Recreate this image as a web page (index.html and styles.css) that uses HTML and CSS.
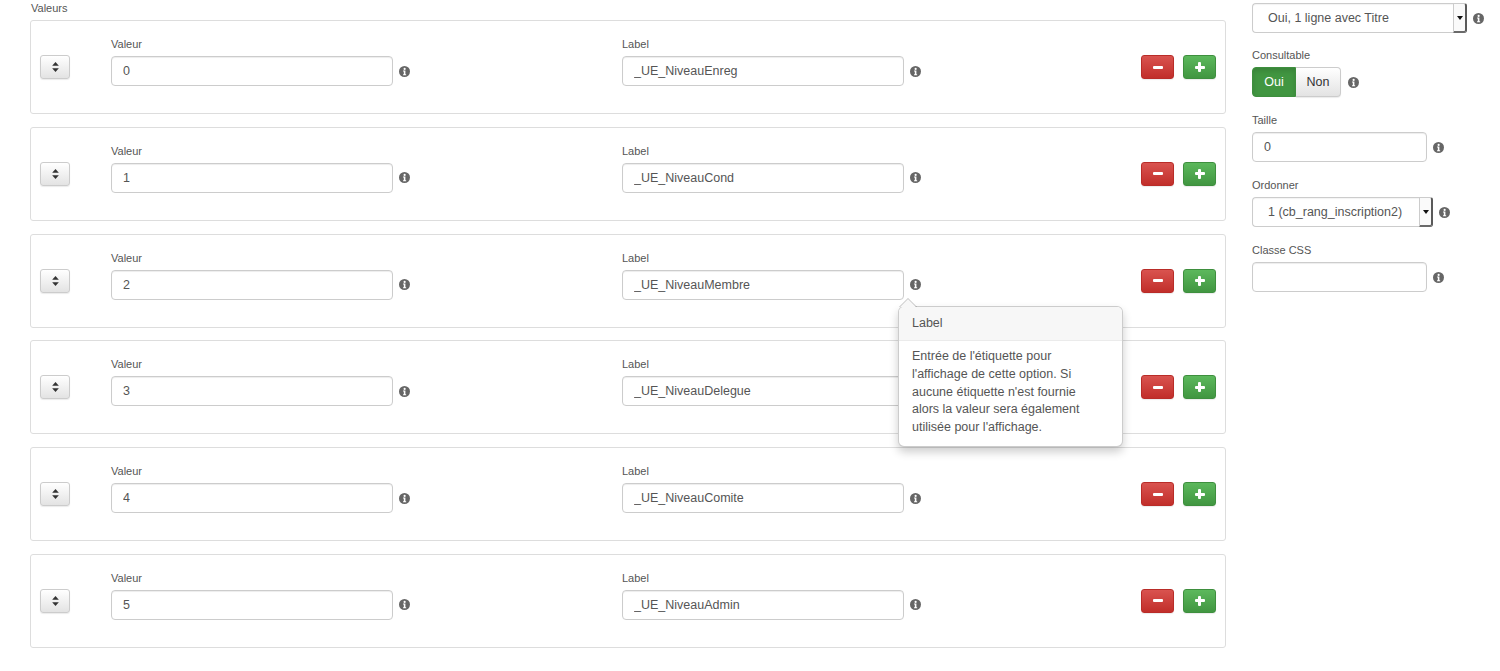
FILE: index.html
```html
<!DOCTYPE html>
<html lang="fr">
<head>
    <meta charset="UTF-8">
    <title>Valeurs du champ</title>
    <link rel="stylesheet" href="styles.css">
</head>
<body>
    <div class="page">
        <div class="values">
            <div class="section-label">Valeurs</div>

            <div class="value-row">
                <div><button class="btn btn-default btn-handle"><svg class="ico-sort" viewBox="0 0 8 12"><polygon points="4,0 8,4.6 0,4.6"/><polygon points="0,7.4 8,7.4 4,12"/></svg></button></div>
                <div class="field">
                    <label>Valeur</label>
                    <div class="field-line"><input class="form-control" type="text" value="0"><span class="info"><svg viewBox="0 0 16 16"><circle cx="8" cy="8" r="8"/><circle class="w" cx="8.2" cy="4.3" r="1.6"/><path class="w" d="M5.9 6.6h3.4v5.3h1.1v1.5H5.9v-1.5h1.1V8.1H5.9z"/></svg></span></div>
                </div>
                <div class="field">
                    <label>Label</label>
                    <div class="field-line"><input class="form-control" type="text" value="_UE_NiveauEnreg"><span class="info"><svg viewBox="0 0 16 16"><circle cx="8" cy="8" r="8"/><circle class="w" cx="8.2" cy="4.3" r="1.6"/><path class="w" d="M5.9 6.6h3.4v5.3h1.1v1.5H5.9v-1.5h1.1V8.1H5.9z"/></svg></span></div>
                </div>
                <div class="row-actions">
                    <button class="btn btn-danger"><span class="minus"></span></button>
                    <button class="btn btn-success"><span class="plus"></span></button>
                </div>
            </div>

            <div class="value-row">
                <div><button class="btn btn-default btn-handle"><svg class="ico-sort" viewBox="0 0 8 12"><polygon points="4,0 8,4.6 0,4.6"/><polygon points="0,7.4 8,7.4 4,12"/></svg></button></div>
                <div class="field">
                    <label>Valeur</label>
                    <div class="field-line"><input class="form-control" type="text" value="1"><span class="info"><svg viewBox="0 0 16 16"><circle cx="8" cy="8" r="8"/><circle class="w" cx="8.2" cy="4.3" r="1.6"/><path class="w" d="M5.9 6.6h3.4v5.3h1.1v1.5H5.9v-1.5h1.1V8.1H5.9z"/></svg></span></div>
                </div>
                <div class="field">
                    <label>Label</label>
                    <div class="field-line"><input class="form-control" type="text" value="_UE_NiveauCond"><span class="info"><svg viewBox="0 0 16 16"><circle cx="8" cy="8" r="8"/><circle class="w" cx="8.2" cy="4.3" r="1.6"/><path class="w" d="M5.9 6.6h3.4v5.3h1.1v1.5H5.9v-1.5h1.1V8.1H5.9z"/></svg></span></div>
                </div>
                <div class="row-actions">
                    <button class="btn btn-danger"><span class="minus"></span></button>
                    <button class="btn btn-success"><span class="plus"></span></button>
                </div>
            </div>

            <div class="value-row">
                <div><button class="btn btn-default btn-handle"><svg class="ico-sort" viewBox="0 0 8 12"><polygon points="4,0 8,4.6 0,4.6"/><polygon points="0,7.4 8,7.4 4,12"/></svg></button></div>
                <div class="field">
                    <label>Valeur</label>
                    <div class="field-line"><input class="form-control" type="text" value="2"><span class="info"><svg viewBox="0 0 16 16"><circle cx="8" cy="8" r="8"/><circle class="w" cx="8.2" cy="4.3" r="1.6"/><path class="w" d="M5.9 6.6h3.4v5.3h1.1v1.5H5.9v-1.5h1.1V8.1H5.9z"/></svg></span></div>
                </div>
                <div class="field">
                    <label>Label</label>
                    <div class="field-line"><input class="form-control" type="text" value="_UE_NiveauMembre"><span class="info has-popover"><svg viewBox="0 0 16 16"><circle cx="8" cy="8" r="8"/><circle class="w" cx="8.2" cy="4.3" r="1.6"/><path class="w" d="M5.9 6.6h3.4v5.3h1.1v1.5H5.9v-1.5h1.1V8.1H5.9z"/></svg>
                        <div class="popover">
                            <div class="popover-title">Label</div>
                            <div class="popover-content">Entrée de l'étiquette pour<br>l'affichage de cette option. Si<br>aucune étiquette n'est fournie<br>alors la valeur sera également<br>utilisée pour l'affichage.</div>
                        </div>
                    </span></div>
                </div>
                <div class="row-actions">
                    <button class="btn btn-danger"><span class="minus"></span></button>
                    <button class="btn btn-success"><span class="plus"></span></button>
                </div>
            </div>

            <div class="value-row">
                <div><button class="btn btn-default btn-handle"><svg class="ico-sort" viewBox="0 0 8 12"><polygon points="4,0 8,4.6 0,4.6"/><polygon points="0,7.4 8,7.4 4,12"/></svg></button></div>
                <div class="field">
                    <label>Valeur</label>
                    <div class="field-line"><input class="form-control" type="text" value="3"><span class="info"><svg viewBox="0 0 16 16"><circle cx="8" cy="8" r="8"/><circle class="w" cx="8.2" cy="4.3" r="1.6"/><path class="w" d="M5.9 6.6h3.4v5.3h1.1v1.5H5.9v-1.5h1.1V8.1H5.9z"/></svg></span></div>
                </div>
                <div class="field">
                    <label>Label</label>
                    <div class="field-line"><input class="form-control" type="text" value="_UE_NiveauDelegue"><span class="info"><svg viewBox="0 0 16 16"><circle cx="8" cy="8" r="8"/><circle class="w" cx="8.2" cy="4.3" r="1.6"/><path class="w" d="M5.9 6.6h3.4v5.3h1.1v1.5H5.9v-1.5h1.1V8.1H5.9z"/></svg></span></div>
                </div>
                <div class="row-actions">
                    <button class="btn btn-danger"><span class="minus"></span></button>
                    <button class="btn btn-success"><span class="plus"></span></button>
                </div>
            </div>

            <div class="value-row">
                <div><button class="btn btn-default btn-handle"><svg class="ico-sort" viewBox="0 0 8 12"><polygon points="4,0 8,4.6 0,4.6"/><polygon points="0,7.4 8,7.4 4,12"/></svg></button></div>
                <div class="field">
                    <label>Valeur</label>
                    <div class="field-line"><input class="form-control" type="text" value="4"><span class="info"><svg viewBox="0 0 16 16"><circle cx="8" cy="8" r="8"/><circle class="w" cx="8.2" cy="4.3" r="1.6"/><path class="w" d="M5.9 6.6h3.4v5.3h1.1v1.5H5.9v-1.5h1.1V8.1H5.9z"/></svg></span></div>
                </div>
                <div class="field">
                    <label>Label</label>
                    <div class="field-line"><input class="form-control" type="text" value="_UE_NiveauComite"><span class="info"><svg viewBox="0 0 16 16"><circle cx="8" cy="8" r="8"/><circle class="w" cx="8.2" cy="4.3" r="1.6"/><path class="w" d="M5.9 6.6h3.4v5.3h1.1v1.5H5.9v-1.5h1.1V8.1H5.9z"/></svg></span></div>
                </div>
                <div class="row-actions">
                    <button class="btn btn-danger"><span class="minus"></span></button>
                    <button class="btn btn-success"><span class="plus"></span></button>
                </div>
            </div>

            <div class="value-row">
                <div><button class="btn btn-default btn-handle"><svg class="ico-sort" viewBox="0 0 8 12"><polygon points="4,0 8,4.6 0,4.6"/><polygon points="0,7.4 8,7.4 4,12"/></svg></button></div>
                <div class="field">
                    <label>Valeur</label>
                    <div class="field-line"><input class="form-control" type="text" value="5"><span class="info"><svg viewBox="0 0 16 16"><circle cx="8" cy="8" r="8"/><circle class="w" cx="8.2" cy="4.3" r="1.6"/><path class="w" d="M5.9 6.6h3.4v5.3h1.1v1.5H5.9v-1.5h1.1V8.1H5.9z"/></svg></span></div>
                </div>
                <div class="field">
                    <label>Label</label>
                    <div class="field-line"><input class="form-control" type="text" value="_UE_NiveauAdmin"><span class="info"><svg viewBox="0 0 16 16"><circle cx="8" cy="8" r="8"/><circle class="w" cx="8.2" cy="4.3" r="1.6"/><path class="w" d="M5.9 6.6h3.4v5.3h1.1v1.5H5.9v-1.5h1.1V8.1H5.9z"/></svg></span></div>
                </div>
                <div class="row-actions">
                    <button class="btn btn-danger"><span class="minus"></span></button>
                    <button class="btn btn-success"><span class="plus"></span></button>
                </div>
            </div>
        </div>

        <div class="sidebar">
            <div class="side-group first">
                <div class="side-line">
                    <div class="select-box select-wide"><span>Oui, 1 ligne avec Titre</span><span class="select-arrow"></span></div>
                    <span class="info"><svg viewBox="0 0 16 16"><circle cx="8" cy="8" r="8"/><circle class="w" cx="8.2" cy="4.3" r="1.6"/><path class="w" d="M5.9 6.6h3.4v5.3h1.1v1.5H5.9v-1.5h1.1V8.1H5.9z"/></svg></span>
                </div>
            </div>
            <div class="side-group">
                <label class="side-label">Consultable</label>
                <div class="side-line">
                    <div class="btn-group">
                        <button class="btn btn-on">Oui</button><button class="btn btn-off">Non</button>
                    </div>
                    <span class="info info-gap"><svg viewBox="0 0 16 16"><circle cx="8" cy="8" r="8"/><circle class="w" cx="8.2" cy="4.3" r="1.6"/><path class="w" d="M5.9 6.6h3.4v5.3h1.1v1.5H5.9v-1.5h1.1V8.1H5.9z"/></svg></span>
                </div>
            </div>
            <div class="side-group">
                <label class="side-label">Taille</label>
                <div class="side-line">
                    <input class="form-control form-small" type="text" value="0">
                    <span class="info"><svg viewBox="0 0 16 16"><circle cx="8" cy="8" r="8"/><circle class="w" cx="8.2" cy="4.3" r="1.6"/><path class="w" d="M5.9 6.6h3.4v5.3h1.1v1.5H5.9v-1.5h1.1V8.1H5.9z"/></svg></span>
                </div>
            </div>
            <div class="side-group">
                <label class="side-label">Ordonner</label>
                <div class="side-line">
                    <div class="select-box select-order"><span>1 (cb_rang_inscription2)</span><span class="select-arrow"></span></div>
                    <span class="info"><svg viewBox="0 0 16 16"><circle cx="8" cy="8" r="8"/><circle class="w" cx="8.2" cy="4.3" r="1.6"/><path class="w" d="M5.9 6.6h3.4v5.3h1.1v1.5H5.9v-1.5h1.1V8.1H5.9z"/></svg></span>
                </div>
            </div>
            <div class="side-group">
                <label class="side-label">Classe CSS</label>
                <div class="side-line">
                    <input class="form-control form-small" type="text" value="">
                    <span class="info"><svg viewBox="0 0 16 16"><circle cx="8" cy="8" r="8"/><circle class="w" cx="8.2" cy="4.3" r="1.6"/><path class="w" d="M5.9 6.6h3.4v5.3h1.1v1.5H5.9v-1.5h1.1V8.1H5.9z"/></svg></span>
                </div>
            </div>
        </div>
    </div>
</body>
</html>
```

FILE: styles.css
```css
* {
    box-sizing: border-box;
}
body {
    margin: 0;
    font-family: "Liberation Sans", Arial, sans-serif;
    font-size: 12.5px;
    color: #555;
    background: #fff;
}
.page {
    display: flex;
    align-items: flex-start;
    padding: 1px 0 0 30px;
}
.values {
    width: 1196px;
}
.section-label,
.field label,
.side-label {
    display: block;
    font-size: 11px;
    line-height: 14px;
    color: #555;
    margin-bottom: 5px;
}
.section-label {
    padding-left: 1px;
}

/* value rows */
.value-row {
    display: grid;
    grid-template-columns: 71px 511px 1fr auto;
    align-items: start;
    border: 1px solid #ddd;
    border-radius: 3px;
    padding: 16px 9px 27px;
    margin-bottom: 12.8px;
}
.field-line {
    display: flex;
    align-items: center;
    gap: 6px;
}
.form-control {
    width: 282px;
    height: 30px;
    padding: 0 11px;
    border: 1px solid #ccc;
    border-radius: 4px;
    background: #fff;
    font: inherit;
    color: #555;
    box-shadow: inset 0 1px 1px rgba(0, 0, 0, 0.075);
}
.info {
    display: block;
    line-height: 0;
}
.info svg {
    display: block;
    width: 11px;
    height: 11px;
    fill: #666;
}
.info svg .w {
    fill: #fff;
}
.row-actions {
    display: flex;
    gap: 9px;
    margin-top: 18px;
}

/* buttons */
.btn {
    display: flex;
    align-items: center;
    justify-content: center;
    margin: 0;
    padding: 0;
    border-radius: 3px;
    font: inherit;
    cursor: pointer;
}
.btn-default {
    background: linear-gradient(#fff, #e3e3e3);
    border: 1px solid #ccc;
    box-shadow: 0 1px 1px rgba(0, 0, 0, 0.08);
}
.btn-handle {
    width: 30px;
    height: 24px;
    margin-top: 18px;
}
.ico-sort {
    width: 7px;
    height: 10px;
    fill: #333;
}
.btn-danger,
.btn-success {
    width: 33px;
    height: 24px;
    box-shadow: 0 1px 1px rgba(0, 0, 0, 0.08);
}
.btn-danger {
    background: linear-gradient(#d9534f, #c12e2a);
    border: 1px solid #b92c28;
}
.btn-success {
    background: linear-gradient(#5cb85c, #419641);
    border: 1px solid #3e8f3e;
}
.minus {
    display: block;
    width: 10px;
    height: 3px;
    background: #fff;
    border-radius: 1px;
}
.plus {
    position: relative;
    display: block;
    width: 10px;
    height: 10px;
}
.plus::before,
.plus::after {
    content: "";
    position: absolute;
    background: #fff;
    border-radius: 1px;
}
.plus::before {
    left: 0;
    top: 3.5px;
    width: 10px;
    height: 3px;
}
.plus::after {
    left: 3.5px;
    top: 0;
    width: 3px;
    height: 10px;
}

/* popover */
.has-popover {
    position: relative;
}
.popover {
    position: absolute;
    top: 27px;
    left: -12px;
    z-index: 10;
    width: 225px;
    background: #fff;
    border: 1px solid rgba(0, 0, 0, 0.2);
    border-radius: 6px;
    box-shadow: 0 5px 10px rgba(0, 0, 0, 0.2);
    line-height: 17.75px;
    text-align: left;
}
.popover::before,
.popover::after {
    content: "";
    position: absolute;
    border-style: solid;
    border-color: transparent;
}
.popover::before {
    left: 0;
    top: -9px;
    border-width: 0 9px 9px;
    border-bottom-color: rgba(0, 0, 0, 0.25);
}
.popover::after {
    left: 1px;
    top: -8px;
    border-width: 0 8px 8px;
    border-bottom-color: #f7f7f7;
}
.popover-title {
    padding: 7px 13px 8px;
    line-height: 18px;
    background: #f7f7f7;
    border-bottom: 1px solid #ebebeb;
    border-radius: 5px 5px 0 0;
}
.popover-content {
    padding: 7px 13px 9px;
}

/* sidebar */
.sidebar {
    width: 248px;
    margin-left: 26px;
    padding-top: 2px;
}
.side-group {
    margin-bottom: 16px;
}
.side-group.first {
    margin-bottom: 15px;
}
.side-line {
    display: flex;
    align-items: center;
    gap: 6px;
}
.form-small {
    width: 175px;
}
.select-box {
    display: flex;
    align-items: center;
    height: 30px;
    padding-left: 15px;
    border: 1px solid #ccc;
    border-right: none;
    border-radius: 4px 3px 3px 4px;
    background: #fff;
    box-shadow: inset 0 1px 1px rgba(0, 0, 0, 0.05);
}
.select-box span:first-child {
    flex: 1;
}
.select-wide {
    width: 215px;
}
.select-order {
    width: 181px;
}
.select-arrow {
    position: relative;
    align-self: stretch;
    width: 14px;
    margin: -1px 0;
    border: 1px solid #ccc;
    border-right: 2px solid #5a5a5a;
    border-bottom: 2px solid #6a6a6a;
    border-radius: 0 3px 3px 0;
    background: #fafafa;
}
.select-arrow::after {
    content: "";
    position: absolute;
    left: 3px;
    top: 12px;
    border-style: solid;
    border-width: 4px 3px 0;
    border-color: #111 transparent transparent;
}
.btn-group {
    display: flex;
}
.btn-on,
.btn-off {
    height: 30px;
    font-size: 12.5px;
}
.btn-on {
    width: 44px;
    color: #fff;
    background: #419641;
    border: 1px solid #3e8f3e;
    border-radius: 4px 0 0 4px;
    box-shadow: inset 0 3px 5px rgba(0, 0, 0, 0.125);
}
.btn-off {
    width: 45px;
    color: #333;
    background: linear-gradient(#fff, #e3e3e3);
    border: 1px solid #ccc;
    border-left: none;
    border-radius: 0 4px 4px 0;
    box-shadow: 0 1px 1px rgba(0, 0, 0, 0.08);
}
.info-gap {
    margin-left: 1px;
}
```
